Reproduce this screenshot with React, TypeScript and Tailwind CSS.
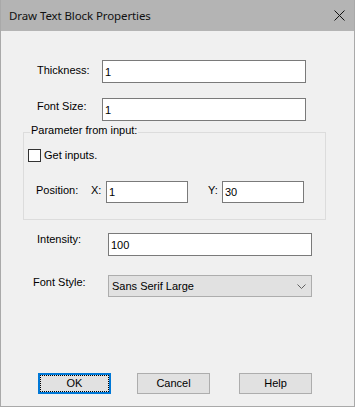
const uiFont = "font-['Liberation_Sans',Arial,sans-serif] text-[11px] leading-[13px] text-black"

function TextBox({ value, className }: { value: string; className: string }) {
  return (
    <input
      readOnly
      defaultValue={value}
      className={`${className} border border-[#7a7a7a] bg-white px-[2px] outline-none ${uiFont}`}
    />
  )
}

function DialogButton({ label, focused }: { label: string; focused?: boolean }) {
  if (focused) {
    return (
      <button className={`flex h-[21px] w-[73px] border-2 border-[#0078d7] bg-[#e1e1e1] ${uiFont}`}>
        <span className="flex h-full w-full items-center justify-center border border-dotted border-black">
          {label}
        </span>
      </button>
    )
  }
  return (
    <button
      className={`flex h-[21px] w-[73px] items-center justify-center border border-[#adadad] bg-[#e1e1e1] ${uiFont}`}
    >
      {label}
    </button>
  )
}

export default function App() {
  return (
    <div className="flex h-[407px] w-[355px] flex-col border border-t-0 border-[#a9a9a9] bg-[#f0f0f0]">
      {/* title bar */}
      <div className="flex h-[31px] shrink-0 items-center justify-between bg-[#b4b4b4] pl-[8px] pr-[9px]">
        <span className="font-['Noto_Sans',sans-serif] text-[11.5px] leading-[16px] tracking-[-0.1px] text-[#111]">
          Draw Text Block Properties
        </span>
        <svg width="11" height="11" viewBox="0 0 11 11" className="mb-[1px]">
          <path d="M0.5 0.5 L10.5 10.5 M10.5 0.5 L0.5 10.5" stroke="#111" strokeWidth="1" />
        </svg>
      </div>

      <div className={`flex flex-col pt-[29px] ${uiFont}`}>
        <div className="flex h-[23px] items-start pl-[36px]">
          <span className="mt-[4px] w-[65px]">Thickness:</span>
          <TextBox value="1" className="h-[23px] w-[204px]" />
        </div>
        <div className="mt-[15px] flex h-[23px] items-start pl-[36px]">
          <span className="mt-[2px] w-[65px]">Font Size:</span>
          <TextBox value="1" className="h-[23px] w-[204px]" />
        </div>

        {/* group box */}
        <div className="relative ml-[22px] mt-[11px] h-[88px] w-[303px] border border-[#dcdcdc]">
          <span className="absolute -top-[9px] left-[6px] bg-[#f0f0f0] px-[1px]">Parameter from input:</span>
          <div className="mt-[16px] flex items-center pl-[4px]">
            <span className="h-[13px] w-[13px] border border-[#333] bg-white" />
            <span className="ml-[3px]">Get inputs.</span>
          </div>
          <div className="mt-[19px] flex h-[22px] items-start pl-[12px]">
            <span className="mt-[3px] w-[55px]">Position:</span>
            <span className="mt-[3px] w-[15px]">X:</span>
            <TextBox value="1" className="h-[22px] w-[82px]" />
            <span className="ml-[20px] mt-[3px] w-[14px]">Y:</span>
            <TextBox value="30" className="h-[22px] w-[82px]" />
          </div>
        </div>

        <div className="mt-[13px] flex h-[23px] items-start pl-[36px]">
          <span className="w-[71px]">Intensity:</span>
          <TextBox value="100" className="h-[23px] w-[204px]" />
        </div>
        <div className="mt-[19px] flex h-[22px] items-start pl-[32px]">
          <span className="mt-[1px] w-[75px]">Font Style:</span>
          <div className="flex h-[22px] w-[204px] items-center justify-between border border-[#adadad] bg-[#e1e1e1] pl-[3px] pr-[5px]">
            <span>Sans Serif Large</span>
            <svg width="9" height="5" viewBox="0 0 9 5">
              <path d="M0.5 0.5 L4.5 4.5 L8.5 0.5" stroke="#606060" strokeWidth="1" fill="none" />
            </svg>
          </div>
        </div>

        <div className="mt-[76px] flex pl-[37px]">
          <DialogButton label="OK" focused />
          <div className="ml-[26px]">
            <DialogButton label="Cancel" />
          </div>
          <div className="ml-[29px]">
            <DialogButton label="Help" />
          </div>
        </div>
      </div>
    </div>
  )
}
